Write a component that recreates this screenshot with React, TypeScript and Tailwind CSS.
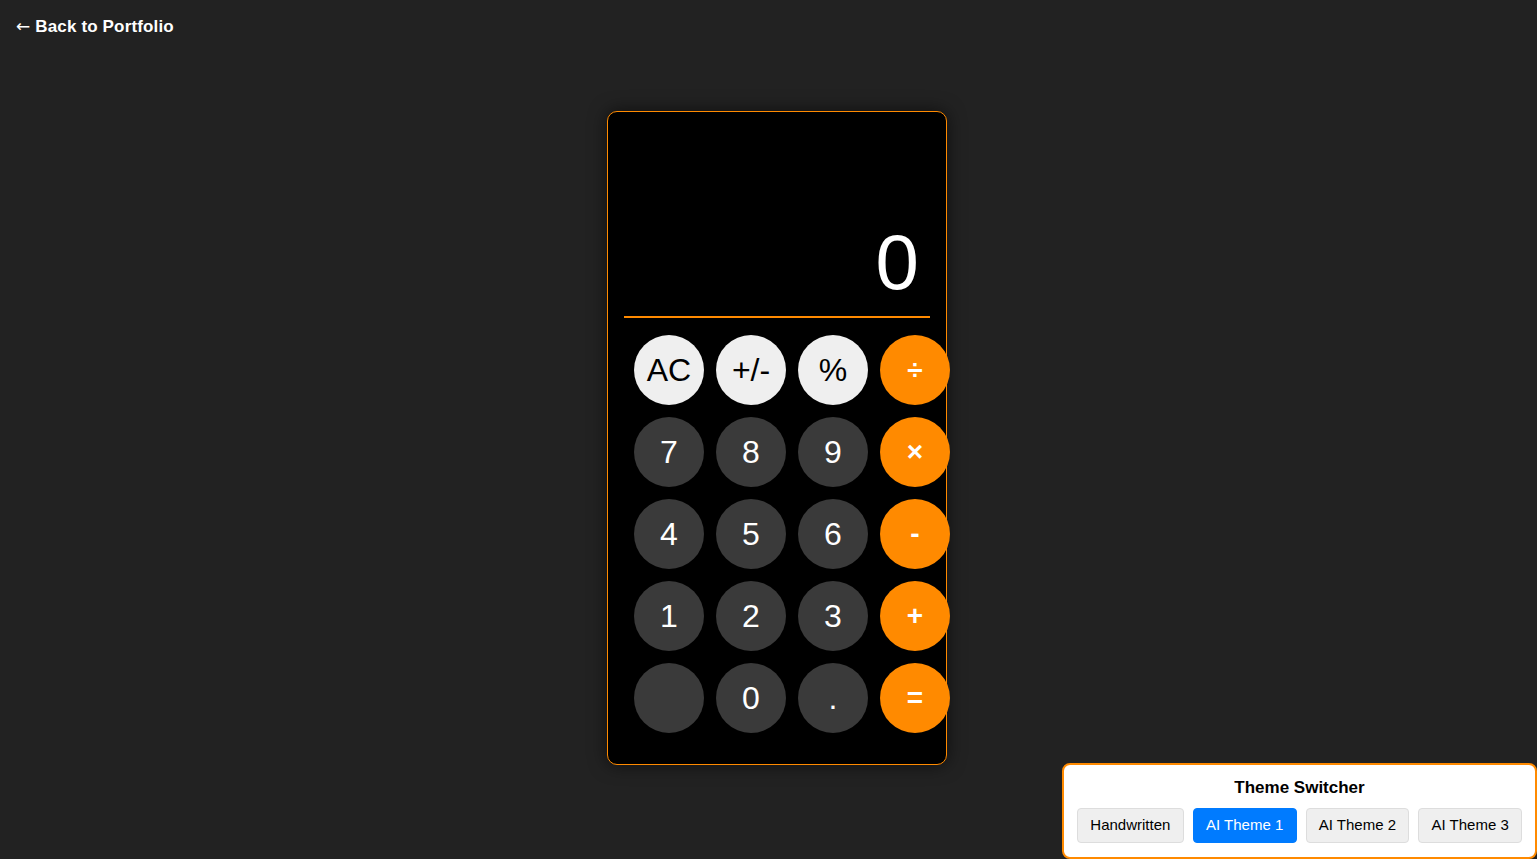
import { useState } from "react";

const keys = [
    { label: "AC", kind: "light" },
    { label: "+/-", kind: "light" },
    { label: "%", kind: "light" },
    { label: "÷", kind: "op" },
    { label: "7", kind: "num" },
    { label: "8", kind: "num" },
    { label: "9", kind: "num" },
    { label: "×", kind: "op" },
    { label: "4", kind: "num" },
    { label: "5", kind: "num" },
    { label: "6", kind: "num" },
    { label: "-", kind: "op" },
    { label: "1", kind: "num" },
    { label: "2", kind: "num" },
    { label: "3", kind: "num" },
    { label: "+", kind: "op" },
    { label: "", kind: "num" },
    { label: "0", kind: "num" },
    { label: ".", kind: "num" },
    { label: "=", kind: "op" },
];

const themes = ["Handwritten", "AI Theme 1", "AI Theme 2", "AI Theme 3"];

const keyClass = (kind: string) => {
    if (kind === "light") return "bg-[#efefef] text-black text-[32px] font-normal";
    if (kind === "op") return "bg-[#ff8a00] text-white text-[28px] font-bold";
    return "bg-[#3a3a3a] text-white text-[32px] font-normal";
};

export default function App() {
    const [theme, setTheme] = useState("AI Theme 1");
    const [display] = useState("0");

    return (
        <div className="min-h-screen bg-[#222222] font-['Liberation_Sans',Arial,sans-serif]">
            <div className="px-4 pt-[15px]">
                <a href="#" className="text-white font-bold text-[17px] leading-[22px] tracking-[0.15px]">
                    <span className="font-['DejaVu_Sans',sans-serif] font-normal">←</span> Back to Portfolio
                </a>
            </div>

            <div className="flex justify-center pt-[72px] pl-[17px]">
                <div className="w-[340px] h-[654px] bg-black border border-[#ff8a00] rounded-[10px] px-4 shadow-[0_0_18px_rgba(0,0,0,0.6)]">
                    <div className="h-[206px] flex items-end justify-end border-b-2 border-[#ff8a00] pr-[11px] pb-[15px]">
                        <span className="text-white text-[78px] leading-none font-light">{display}</span>
                    </div>
                    <div className="grid grid-cols-[repeat(4,70px)] gap-x-3 gap-y-3 ml-[10px] mt-[17px] w-[316px]">
                        {keys.map((k, i) => (
                            <button
                                key={i}
                                className={`w-[70px] h-[70px] rounded-full flex items-center justify-center leading-none ${keyClass(k.kind)}`}
                            >
                                {k.label}
                            </button>
                        ))}
                    </div>
                </div>
            </div>

            <div className="fixed bottom-0 right-0 w-[475px] bg-white border-2 border-[#ff8a00] rounded-[8px] px-[13px] pt-[13px] pb-[14px]">
                <h3 className="text-center text-black font-bold text-[17px] leading-[20px] mb-[10px]">Theme Switcher</h3>
                <div className="flex gap-[9px]">
                    {themes.map((t) => (
                        <button
                            key={t}
                            onClick={() => setTheme(t)}
                            className={`h-[35px] px-[12px] text-[15px] rounded-[4px] border ${
                                theme === t
                                    ? "bg-[#007bff] border-[#007bff] text-white"
                                    : "bg-[#efefef] border-[#dddddd] text-black"
                            } ${t === "Handwritten" ? "w-[107px]" : "w-[104px]"}`}
                        >
                            {t}
                        </button>
                    ))}
                </div>
            </div>
        </div>
    );
}
